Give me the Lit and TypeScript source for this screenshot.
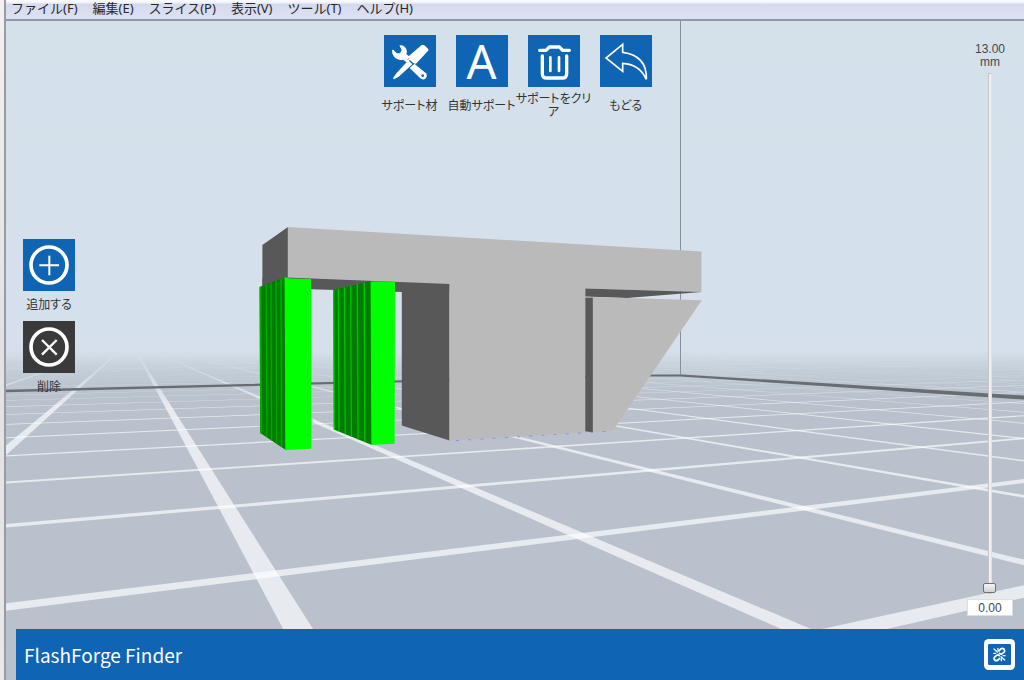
import { LitElement, html, svg, css } from "lit";
import { customElement, state } from "lit/decorators.js";

const HORIZON = 342;
const LEFT_VANISH = 130.5;
const RIGHT_VANISH = 2147;

/* Floor lines that run away to the far left vanishing point. */
const depthLines = Array.from({ length: 34 }, (_, i) => {
  const slope = 0.584 + 1.735 * (i - 12);
  const drop = 400;
  const a = LEFT_VANISH + (slope - 0.052) * drop;
  const b = LEFT_VANISH + (slope + 0.052) * drop;
  return `${LEFT_VANISH},${HORIZON} ${a},${HORIZON + drop} ${b},${HORIZON + drop}`;
});

/* Floor lines that run away to the right vanishing point. */
const crossLines = Array.from({ length: 44 }, (_, i) => {
  const k = 0.003774 + 0.00167 * (i - 1);
  const near = HORIZON + 1 / (k - 0.000053);
  const far = HORIZON + 1 / (k + 0.000053);
  return `6,${far} 6,${near} ${RIGHT_VANISH},${HORIZON}`;
});

const dots = Array.from({ length: 13 }, (_, i) => [456 + i * 12.2, 440 - i * 0.74]);

@customElement("model-scene")
export class ModelScene extends LitElement {
  static styles = css`
    :host { display: block; }
    .scene { display: block; width: 100%; height: 100%; }
  `;

  render() {
    return html`
      <svg class="scene" viewBox="6 21 1018 659" preserveAspectRatio="xMidYMid slice" aria-hidden="true">
        <defs>
          <linearGradient id="sky" x1="0" y1="0" x2="0" y2="1">
            <stop offset="0" stop-color="#d4e0ea" />
            <stop offset="1" stop-color="#d5e0ec" />
          </linearGradient>
          <linearGradient id="fog" gradientUnits="userSpaceOnUse" x1="0" y1="350" x2="0" y2="405">
            <stop offset="0" stop-color="#d5e0ec" />
            <stop offset="0.1" stop-color="#d3dee9" stop-opacity="0.92" />
            <stop offset="0.4" stop-color="#c6d1db" stop-opacity="0.65" />
            <stop offset="1" stop-color="#b9c2cc" stop-opacity="0" />
          </linearGradient>
        </defs>
        <rect x="0" y="0" width="1030" height="360" fill="url(#sky)" />
        <rect x="0" y="342" width="1030" height="350" fill="#b9c2cc" />
        <g fill="#fff" fill-opacity="0.66">
          ${depthLines.map((p) => svg`<polygon points=${p} />`)}
          ${crossLines.map((p) => svg`<polygon points=${p} />`)}
        </g>
        <rect x="0" y="341" width="1030" height="9.5" fill="#d5e0ec" />
        <rect x="0" y="350" width="1030" height="55" fill="url(#fog)" />
        <polygon fill="#696d71" points="6,389.8 650,374.4 682,374.4 1024,395.6 1024,399.6 680,376.4 650,376.4 6,392.2" />
        <path d="M680.5 21V375" stroke="#899097" fill="none" />

        <polygon fill="#585858" points="262.4,245 288,227 288,280 262.4,290" />
        <polygon fill="#585858" points="262.4,278 288,277 449.5,283 449.5,292 402,292 311,289.3 262.4,288" />
        <polygon fill="#585858" points="401.8,289 449.5,284 449.5,440.5 401.8,425.5" />
        <polygon fill="#bababa" points="287.8,227 701.5,251.5 701.5,292 585.3,288.4 585.3,432.5 449.5,440.5 449.5,284 287.8,277.5" />
        <polygon fill="#585858" points="585.3,288.4 701.5,292 627,298 585.3,296.4" />
        <polygon fill="#585858" points="585.3,297.6 593,297.6 593,432.5 585.3,431.2" />
        <polygon fill="#bababa" points="592.8,297 701.8,300.2 615.5,427 612.5,431 592.8,432" />

        <polygon fill="#007d00" points="259.6,287 285.5,277 285.8,450 260.2,433" />
        <g fill="#00a800">
          <polygon points="259.6,287 261.4,286.3 262.2,434 260.2,433" />
          <polygon points="265.4,285 266.8,284.4 267.4,437.6 266.2,436.8" />
          <polygon points="270.2,283 271.6,282.4 272.2,441 271,440.2" />
          <polygon points="275.4,281 276.8,280.4 277.2,444.4 276,443.6" />
          <polygon points="280.2,279.2 281.8,278.6 282.2,447.6 280.8,446.8" />
        </g>
        <polygon fill="#00ff00" points="284.6,277 290,278.6 311,279 311.2,448.8 285.4,450" />
        <polygon fill="#007d00" points="333.3,290 371,281 372,445 333.8,429.4" />
        <g fill="#00c000">
          <polygon points="333.3,290 334.4,289.7 335,430 333.8,429.4" />
          <polygon points="337.6,289 339,288.6 339.6,431.9 338.4,431.3" />
          <polygon points="343.8,287.5 345.2,287.1 345.8,434.4 344.6,433.9" />
          <polygon points="350,286 351.4,285.7 352,436.8 350.8,436.4" />
          <polygon points="356.6,284.5 358,284.1 358.6,439.6 357.4,439.2" />
          <polygon points="363.4,282.8 365,282.4 365.6,442.4 364.2,441.9" />
        </g>
        <polygon fill="#00ff00" points="370.6,281.6 395,281.4 394.6,443.8 371.4,445" />
        <g fill="#8f90e0">
          ${dots.map(([x, y]) => svg`<rect x=${x} y=${y} width="3" height="1" />`)}
        </g>
      </svg>
    `;
  }
}

const wrench = svg`
  <g fill="#fff">
    <path d="M46 31Q60 28 67 42Q70 50 67 57L82 70L70 83L57 74Q46 78 35 70Q24 61 24 45L28 44L38 55H48L53 45Z" />
    <path d="M91 86L126 115Q132 124 124 131Q116 136 109 130L77 99Z" />
    <path d="M112 31Q116 27 121 31L132 41Q136 45 131 49L96 86L88 85L74 71V64Z" />
    <path d="M73 76L85 88L44 125L30 133L27 130L36 116Z" />
  </g>
  <circle cx="116" cy="122" r="4" fill="#1064b4" />
  <path d="M70 74L76 70M84 90L90 86" stroke="#1064b4" stroke-width="2" />`;

const trash = svg`
  <g fill="none" stroke="#fff" stroke-width="10" stroke-linecap="round" stroke-linejoin="round">
    <path d="M35 46H54L64 36H94L104 46H124" />
    <path d="M43 63V116Q43 129 56 129H103Q116 129 116 116V63" />
    <path d="M67 67V108M93 67V108" stroke-width="8" />
  </g>`;

const undo = svg`<path d="M68 28L18 69L68 109V85Q118 87 139 133Q142 62 68 52Z" fill="none" stroke="#fff" stroke-width="5" />`;

const plus = svg`
  <g fill="none" stroke="#fff">
    <circle cx="78" cy="78" r="54" stroke-width="11" />
    <path d="M49 79H108M79 50V109" stroke-width="6" />
  </g>`;

const cross = svg`
  <g fill="none" stroke="#fff">
    <circle cx="78" cy="78" r="54" stroke-width="11" />
    <path d="M57 57L101 101M101 57L57 101" stroke-width="7" />
  </g>`;

@customElement("tool-button")
export class ToolButton extends LitElement {
  static properties = {
    label: {},
    glyph: { attribute: false },
    letter: {},
    dark: { type: Boolean },
  };
  declare label: string;
  declare glyph: unknown;
  declare letter: string;
  declare dark: boolean;

  static styles = css`
    :host { display: block; width: 72px; }
    .tool {
      display: flex; flex-direction: column; align-items: center;
      width: 100%; margin: 0; padding: 0; border: 0; background: none;
      font: 12px/13px "Noto Sans CJK JP", sans-serif;
      font-feature-settings: "palt";
      color: #303438; cursor: pointer;
    }
    .tile {
      display: grid; place-items: center;
      width: 52px; height: 52px; background: #1064b4;
    }
    .tile.dark { background: #3a3a3a; }
    .tile svg { display: block; width: 52px; height: 52px; }
    .letter { font: 47px/52px "Noto Sans", sans-serif; color: #fff; }
    .label {
      display: flex; align-items: center; justify-content: center;
      width: 76px; height: var(--label-height, 34px); margin: 0 -2px;
      text-align: center;
    }
  `;

  render() {
    return html`
      <button class="tool" type="button">
        <span class="tile ${this.dark ? "dark" : ""}">
          ${this.letter
            ? html`<span class="letter" aria-hidden="true">${this.letter}</span>`
            : html`<svg viewBox="0 0 156 156" aria-hidden="true">${this.glyph}</svg>`}
        </span>
        <span class="label">${this.label}</span>
      </button>
    `;
  }
}

@customElement("app-root")
export class AppRoot extends LitElement {
  @state() height = 0;

  static styles = css`
    :host {
      display: grid;
      grid-template-columns: 6px minmax(0, 1fr);
      height: 100vh;
      font-family: "Noto Sans CJK JP", sans-serif;
      overflow: hidden;
    }
    .edge {
      background: linear-gradient(#f2f2f2, #e2e2e2 50%, #e8e8e8);
      border-right: 2px solid #999b9e;
      box-sizing: border-box;
    }
    .window { display: flex; flex-direction: column; min-width: 0; }
    .menu {
      display: flex; gap: 15px; height: 19px; padding: 0 5px;
      background: linear-gradient(#fbfcfe 0, #eef1f9 3px, #d4daec 4px, #dde1f3 100%);
      border-bottom: 2px solid #9298a2;
    }
    .menu button {
      margin: 0; padding: 0; border: 0; background: none;
      font: 13px/16px "Noto Sans", "Noto Sans CJK JP", sans-serif;
      color: #26282c; height: 16px; white-space: nowrap;
    }
    .view {
      position: relative; flex: 1; min-height: 0;
      display: flex; flex-direction: column;
    }
    model-scene { position: absolute; inset: 0; }
    .overlay {
      position: relative; flex: 1; min-height: 0;
      display: grid;
      grid-template-columns: auto 1fr auto;
      grid-template-rows: minmax(0, 1fr);
    }
    .top {
      grid-area: 1 / 1 / 2 / 4; align-self: start;
      display: flex; justify-content: center; padding: 14px 0 0 5px;
    }
    .side {
      --label-height: 24px;
      grid-area: 1 / 1; align-self: center;
      display: grid; gap: 6px; padding: 0 0 14px 7px;
    }
    .layer {
      grid-area: 1 / 3;
      display: flex; flex-direction: column; align-items: center;
      padding: 22px 11px 13px 0; min-height: 0;
      font: 12px/13px "Liberation Sans", sans-serif;
      color: #44484c; text-align: center;
    }
    .track {
      appearance: none; -webkit-appearance: none;
      writing-mode: vertical-lr; direction: rtl;
      flex: 1; min-height: 0; width: 14px; margin: 4px 0 5px; padding: 0;
      background: none;
    }
    .track::-webkit-slider-runnable-track {
      width: 4px; height: 100%; box-sizing: border-box;
      background: #f0f0f0; border: 1px solid #c4c6c8; border-right-color: #e0e0e0;
    }
    .track::-webkit-slider-thumb {
      -webkit-appearance: none; box-sizing: border-box;
      width: 13px; height: 10px; margin-left: -6px;
      background: linear-gradient(#f4f4f4, #d2d2d2);
      border: 1px solid #6f7173; border-radius: 2px;
    }
    .value {
      width: 46px; height: 17px; box-sizing: border-box; margin: 0; padding: 0;
      border: 1px solid #dcdfe4; background: #fff; text-align: center;
      font: 12px/15px "Liberation Sans", sans-serif; color: #44484c;
    }
    .status {
      position: relative; display: flex; align-items: center; justify-content: space-between;
      height: 51px; margin-left: 10px; padding: 0 9px 0 8px;
      background: #1064b4; color: #fff; font-size: 19px; line-height: 28px;
    }
    .link {
      display: block; width: 31px; height: 31px; margin: 0; padding: 0;
      border: 0; background: none;
    }
    .link svg { display: block; width: 31px; height: 31px; }
  `;

  private onInput(e: Event) {
    this.height = Number((e.target as HTMLInputElement).value);
  }

  render() {
    const menus = ["ファイル(F)", "編集(E)", "スライス(P)", "表示(V)", "ツール(T)", "ヘルプ(H)"];
    return html`
      <div class="edge"></div>
      <div class="window">
        <nav class="menu">${menus.map((m) => html`<button type="button">${m}</button>`)}</nav>
        <main class="view">
          <model-scene></model-scene>
          <div class="overlay">
            <div class="top">
              <tool-button label="サポート材" .glyph=${wrench}></tool-button>
              <tool-button label="自動サポート" letter="A"></tool-button>
              <tool-button label="サポートをクリア" .glyph=${trash}></tool-button>
              <tool-button label="もどる" .glyph=${undo}></tool-button>
            </div>
            <div class="side">
              <tool-button label="追加する" .glyph=${plus}></tool-button>
              <tool-button label="削除" .glyph=${cross} dark></tool-button>
            </div>
            <div class="layer">
              <label for="layer">13.00<br />mm</label>
              <input id="layer" class="track" type="range" min="0" max="13" step="0.01"
                .value=${String(this.height)} @input=${this.onInput} />
              <input class="value" type="text" aria-label="mm" .value=${this.height.toFixed(2)} />
            </div>
          </div>
          <footer class="status">
            <span>FlashForge Finder</span>
            <button class="link" type="button" aria-label="FlashForge Finder">
              <svg viewBox="0 0 93 93" aria-hidden="true">
                <rect width="93" height="93" rx="14" fill="#fff" />
                <rect x="12" y="15" width="69" height="63" rx="4" fill="#1064b4" />
                <g fill="none" stroke="#fff" stroke-width="5" stroke-linecap="round" stroke-linejoin="round">
                  <path d="M45 36L50 30Q55 26 60 30Q64 35 60 40L54 44Q49 47 46 43" />
                  <path d="M46 50Q43 46 38 49L32 54Q28 59 32 63Q37 67 42 63L47 58" />
                  <path d="M30 30L40 39M42 28V34M29 43H35M51 53L62 63M57 50H63M52 60V65" stroke-width="4" />
                </g>
              </svg>
            </button>
          </footer>
        </main>
      </div>
    `;
  }
}
